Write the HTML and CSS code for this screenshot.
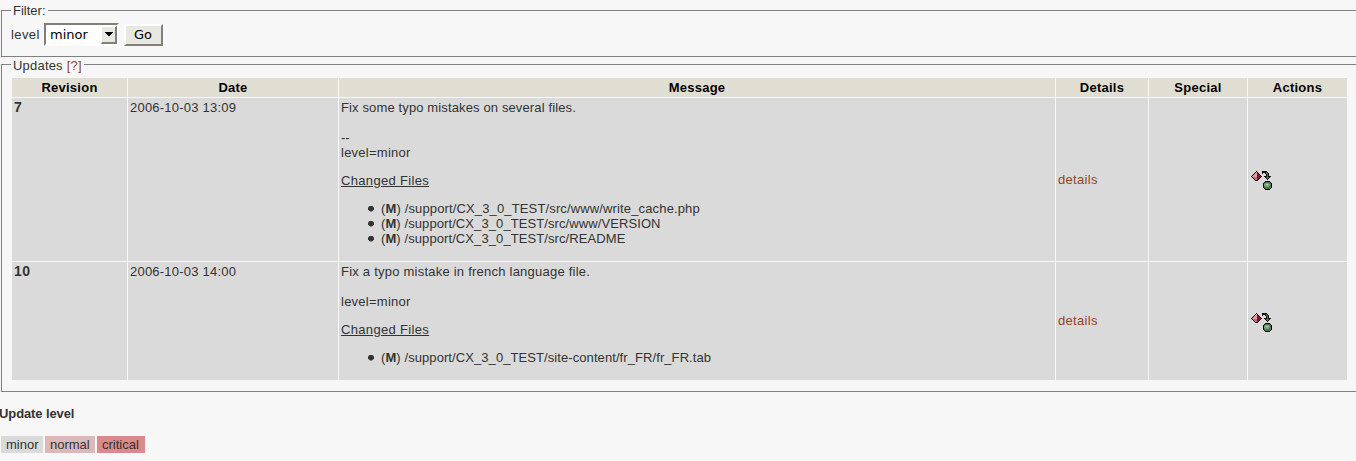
FILE: index.html
```html
<!DOCTYPE html>
<html lang="en">
<head>
<meta charset="utf-8">
<title>Updates</title>
<link rel="stylesheet" href="styles.css">
</head>
<body>
<svg width="0" height="0" class="defs">
  <symbol id="convert" viewBox="0 0 24 24">
    <path fill="#000" d="M6 3h1v1h1v1h1v1h1v1h1v1h1v1h-1v1h-1v1h-1v1h-1v1h-3v-1h-1v-1h-1v-1h-1v-1h-1v-1h1v-1h1v-1h1v-1h1v-1h1z"/>
    <path fill="#e09a98" d="M6 4h1v8h-2v-1h-1v-1h-1v-1h-1v-1h1v-1h1v-1h1v-1h1z"/>
    <path fill="#c46c74" d="M3 9h4v3h-2v-1h-1v-1h-1z"/>
    <path fill="#7d1238" d="M7 5h1v1h1v1h1v1h1v1h-1v1h-1v1h-1v1h-1z"/>
    <path fill="#111" d="M12 3h5v1h1v1h1v3h2v1h-1v1h-1v1h-1v1h-1v-1h-1v-1h-1v-1h-1v-1h2v-2h-1v-1h-2v1h-1z"/>
    <path fill="#536b43" d="M16 4h1v1h1v4h1v1h-1v1h-1v-1h-1v-1h1v-3h-1z"/>
    <path fill="#000" d="M15 13h5v1h1v1h1v5h-1v1h-1v1h-5v-1h-1v-1h-1v-5h1v-1h1z"/>
    <path fill="#4b7550" d="M15 14h5v1h1v5h-1v1h-5v-1h-1v-5h1z"/>
    <path fill="#78a276" d="M15 15h4v1h1v2h-1v1h-4v-1h-1v-2h1z"/>
    <path fill="#c0d8bb" d="M16 16h2v1h-2z"/>
  </symbol>
</svg>
<fieldset class="filter">
  <legend>Filter:</legend>
  <form class="controls">
    <span class="level">level</span>
    <span class="select"><span class="value">minor</span><span class="arrow"><svg width="8" height="5" viewBox="0 0 8 5"><path d="M0 0h8v1h-1v1h-1v1h-1v1h-2v-1h-1v-1h-1v-1h-1z"/></svg></span></span>
    <button type="button" class="go">Go</button>
  </form>
</fieldset>
<fieldset class="updates">
  <legend>Updates <a>[?]</a></legend>
  <table>
    <colgroup><col class="c1"><col class="c2"><col class="c3"><col class="c4"><col class="c5"><col class="c6"></colgroup>
    <tr class="head"><th>Revision</th><th>Date</th><th>Message</th><th>Details</th><th>Special</th><th>Actions</th></tr>
    <tr class="row1">
      <td class="rev">7</td><td class="date">2006-10-03 13:09</td>
      <td><span class="summary">Fix some typo mistakes on several files.</span><br><br>--<br><span class="tag">level=minor</span>
        <p><u>Changed Files</u></p>
        <ul><li>(<b>M</b>) /support/CX_3_0_TEST/src/www/write_cache.php</li><li>(<b>M</b>) /support/CX_3_0_TEST/src/www/VERSION</li><li>(<b>M</b>) /support/CX_3_0_TEST/src/README</li></ul></td>
      <td class="mid"><a>details</a></td><td></td><td class="mid"><svg class="icon"><use href="#convert"/></svg></td>
    </tr>
    <tr class="row2">
      <td class="rev">10</td><td class="date">2006-10-03 14:00</td>
      <td><span class="summary">Fix a typo mistake in french language file.</span><br><br><span class="tag">level=minor</span>
        <p><u>Changed Files</u></p>
        <ul><li>(<b>M</b>) /support/CX_3_0_TEST/site-content/fr_FR/fr_FR.tab</li></ul></td>
      <td class="mid details"><a>details</a></td><td></td><td class="mid"><svg class="icon"><use href="#convert"/></svg></td>
    </tr>
  </table>
</fieldset>
<h4>Update level</h4>
<div class="levels"><span class="minor">minor</span><span class="normal">normal</span><span class="critical">critical</span></div>
</body>
</html>
```
FILE: styles.css
```css
* { box-sizing: border-box; }
html { overflow: hidden; }
body { margin: 0; padding-top: 3px; height: 461px; overflow: hidden; background: #f7f7f7; color: #333; font: 13px/15px "Liberation Sans", Arial, sans-serif; }
.defs { position: absolute; }
svg { display: block; shape-rendering: crispEdges; }
a { color: #95431f; letter-spacing: .3px; }
fieldset { width: 1365px; margin: 0 0 0 1px; padding: 0 9px; border: 1px solid #808080; }
legend { height: 15px; line-height: 15px; padding: 0 2px; }
.filter { height: 54px; }
.updates { height: 335px; }
.updates legend { line-height: 17px; letter-spacing: .2px; }
.controls { display: flex; align-items: center; margin-top: 5px; }
.level { width: 33px; letter-spacing: .4px; }
.select { display: flex; width: 75px; height: 23px; padding: 1px 0 1px 4px; background: #fff; border: 2px solid; border-color: #808078 #fff #fff #808078; font: 13px/18px "DejaVu Sans", sans-serif; color: #000; }
.value { flex: 1; }
.arrow { display: flex; align-items: center; justify-content: center; width: 16px; height: 18px; background: #e8e8e2; border: 1px solid; border-color: #fff #808078 #808078 #fff; border-right-width: 2px; border-bottom-width: 2px; }
.go { width: 39px; height: 22px; margin-left: 5px; padding: 0 1px 0 0; background: #e8e8e2; border: 2px solid; border-color: #fff #808078 #808078 #fff; font: 13px/16px "DejaVu Sans", sans-serif; color: #000; }
table { width: 1337px; table-layout: fixed; border-spacing: 1px; margin-top: 5px; }
.c1 { width: 115px; } .c2 { width: 210px; } .c3 { width: 716px; }
.c4 { width: 92px; } .c5 { width: 98px; } .c6 { width: 99px; }
th { height: 19px; padding: 0; background: #e0ded2; color: #000; line-height: 19px; letter-spacing: .25px; }
td { padding: 2px; background: #dadada; vertical-align: top; }
.row1 td { height: 163px; } .row2 td { height: 118px; }
td.rev { font-size: 14px; font-weight: bold; }
.row2 .rev { letter-spacing: .4px; }
.date { letter-spacing: .22px; }
.row1 .summary { letter-spacing: .13px; }
.row2 .summary { letter-spacing: .23px; }
.tag { letter-spacing: .25px; }
td.mid { vertical-align: middle; }
td.details { padding-bottom: 4px; }
p { margin: 13px 0; letter-spacing: .33px; }
ul { margin: 13px 0 0; padding-left: 40px; list-style: none; }
li { display: flex; align-items: center; white-space: pre; letter-spacing: .09px; }
li::before { content: ""; width: 6px; height: 6px; margin: 0 7px 0 -13px; background: #333; clip-path: polygon(33% 0, 67% 0, 100% 33%, 100% 67%, 67% 100%, 33% 100%, 0 67%, 0 33%); }
.row1 li:first-child { letter-spacing: .14px; }
.row2 li { letter-spacing: .08px; }
.icon { width: 24px; height: 24px; }
.row2 .icon { margin-top: 1px; }
h4 { margin: 14px 0 15px -1px; font-size: 13px; letter-spacing: -.1px; }
.levels { display: flex; gap: 2px; padding-left: 1px; }
.levels span { height: 17px; line-height: 17px; padding-left: 5px; }
.minor { width: 42px; background: #dadada; }
.normal { width: 50px; background: #dcb9b9; }
.critical { width: 48px; background: #da8a8a; }
```
